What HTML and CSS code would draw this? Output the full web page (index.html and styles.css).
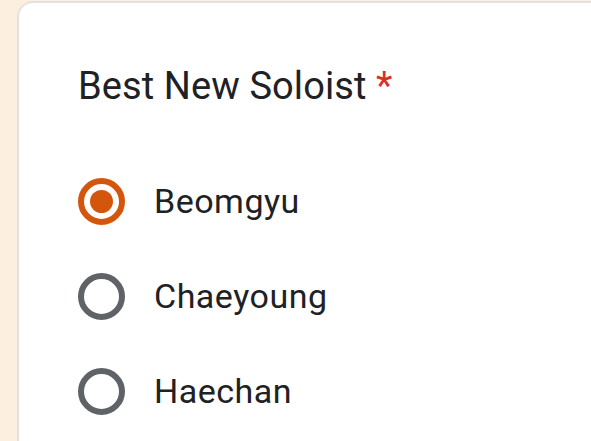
FILE: index.html
```html
<!DOCTYPE html>
<html lang="en">
<head>
  <meta charset="UTF-8" />
  <meta name="viewport" content="width=device-width, initial-scale=1" />
  <title>Best New Soloist</title>
  <link rel="stylesheet" href="styles.css">
</head>
<body>
  <div class="card">
    <div class="question">Best New Soloist <span class="required">*</span></div>

    <div class="options">
      <label class="option">
        <span class="radio checked"><span class="dot"></span></span>
        <span class="label">Beomgyu</span>
      </label>
      <label class="option">
        <span class="radio"></span>
        <span class="label">Chaeyoung</span>
      </label>
      <label class="option">
        <span class="radio"></span>
        <span class="label">Haechan</span>
      </label>
    </div>
  </div>
</body>
</html>
```

FILE: styles.css
```css
* {
  box-sizing: border-box;
}
body {
  margin: 0;
  padding: 1px 0 0 17px;
  background: #fdefdf;
  font-family: Roboto, "Liberation Sans", Arial, sans-serif;
  color: #202124;
  height: 100vh;
  overflow: hidden;
}
.card {
  background: #fff;
  border: 2px solid #e2e2e2;
  border-right: none;
  border-bottom: none;
  border-top-left-radius: 16px;
  height: 100%;
  padding: 61px 0 0 59px;
}
.question {
  font-size: 38px;
  line-height: 44px;
  letter-spacing: 0.1px;
}
.required {
  color: #d93025;
}
.options {
  display: flex;
  flex-direction: column;
  gap: 47px;
  margin-top: 69px;
}
.option {
  display: flex;
  align-items: center;
  gap: 29px;
  height: 48px;
}
.radio {
  width: 47px;
  height: 47px;
  border-radius: 50%;
  border: 6px solid #5f6368;
  display: flex;
  align-items: center;
  justify-content: center;
  flex-shrink: 0;
}
.radio.checked {
  border-color: #d4560c;
}
.dot {
  width: 23px;
  height: 23px;
  border-radius: 50%;
  background: #d4560c;
}
.label {
  font-size: 34px;
  line-height: 48px;
  letter-spacing: 0.5px;
}
```
